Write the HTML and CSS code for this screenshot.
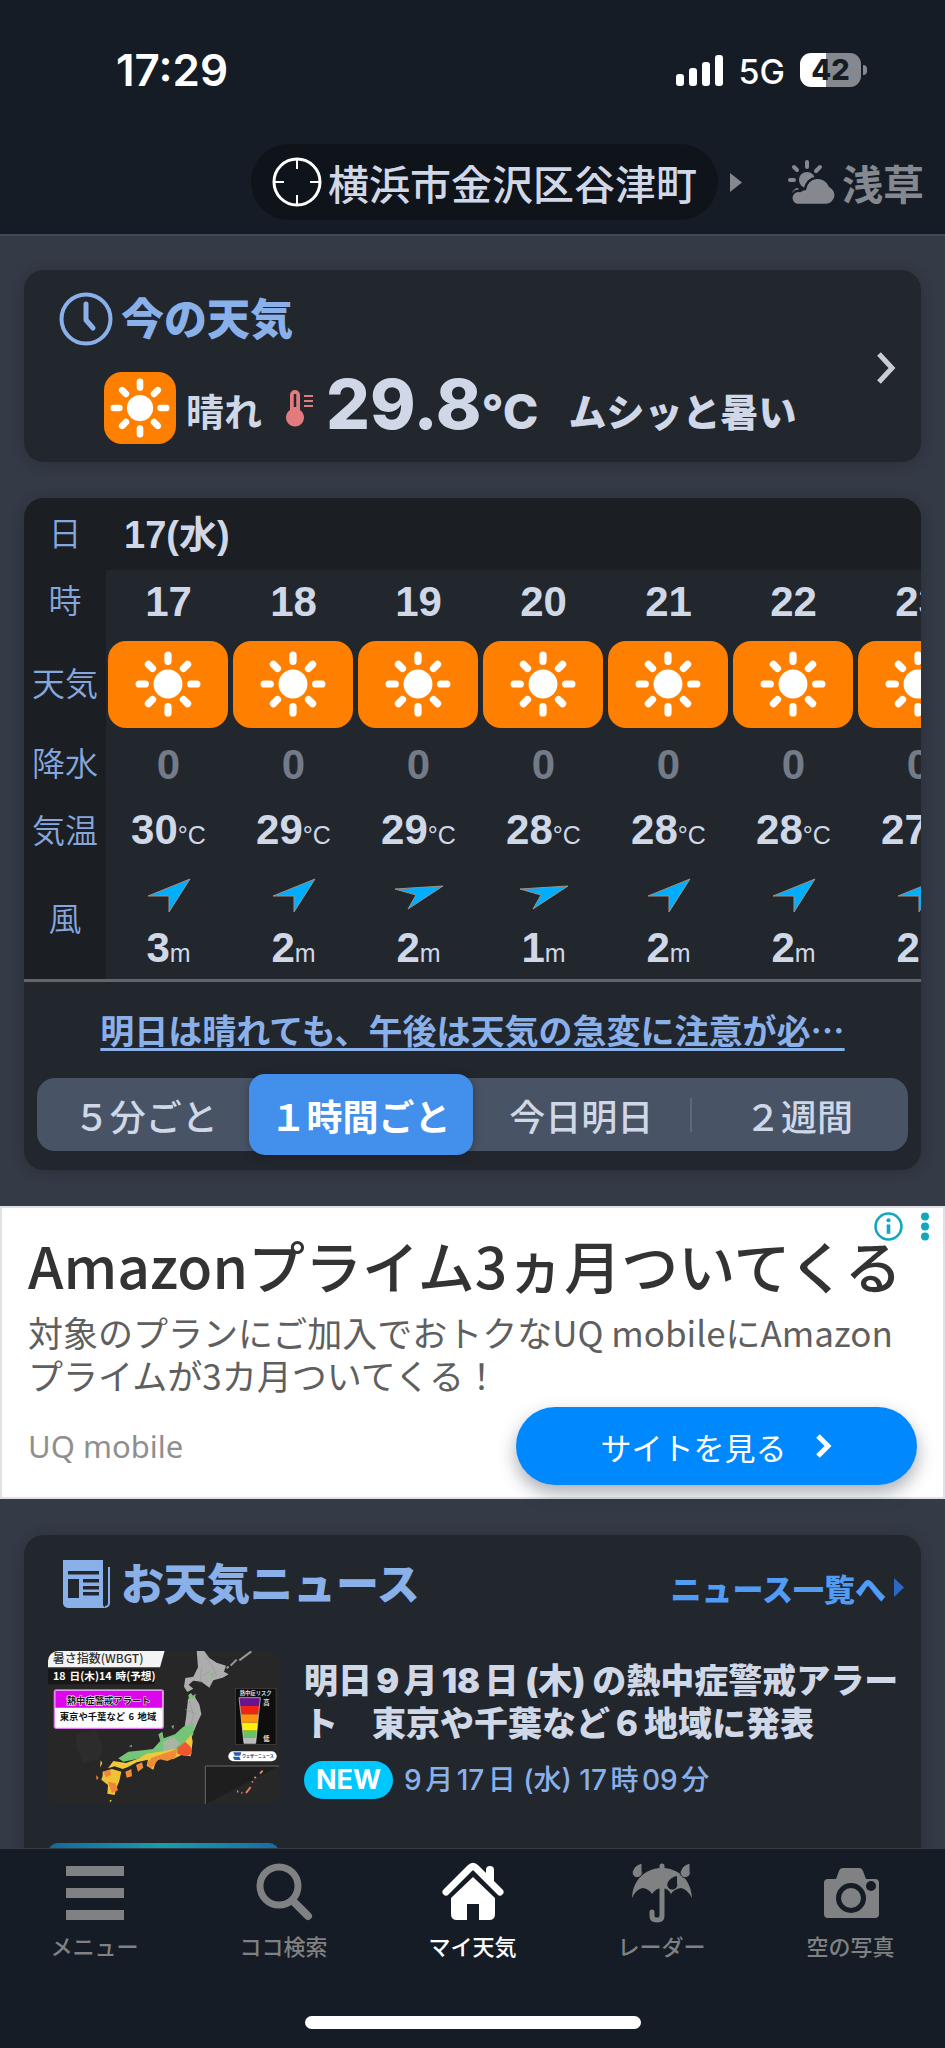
FILE: index.html
```html
<!DOCTYPE html>
<html lang="ja">
<head>
<meta charset="utf-8">
<meta name="viewport" content="width=device-width, initial-scale=1">
<title>マイ天気</title>
<link rel="stylesheet" href="styles.css">
</head>
<body>
<svg class="defs" aria-hidden="true">
  <defs>
    <symbol id="sun" viewBox="0 0 64 64">
      <circle cx="32" cy="32" r="14" fill="#fff"/>
      <g stroke="#fff" stroke-width="7" stroke-linecap="round">
        <path d="M32 4v6M32 54v6M4 32h6M54 32h6M13 13l4 4M47 47l4 4M51 13l-4 4M17 47l-4 4"/>
      </g>
    </symbol>
    <symbol id="wind-ne" viewBox="0 0 50 40">
      <path d="M46 3L25 36V20H4Z" fill="#00aeff" stroke="#a08f86" stroke-width="1"/>
    </symbol>
    <symbol id="wind-e" viewBox="0 0 50 40">
      <path d="M49 10L14 33L22 19L1 13Z" fill="#00aeff" stroke="#a08f86" stroke-width="1"/>
    </symbol>
  </defs>
</svg>

<header class="header">
  <div class="status">
    <span class="clock">17:29</span>
    <svg class="signal" viewBox="0 0 48 31" fill="#fff"><rect x="0" y="19" width="8" height="12" rx="3"/><rect x="13" y="13" width="8" height="18" rx="3"/><rect x="26" y="7" width="8" height="24" rx="3"/><rect x="39" y="0" width="8" height="31" rx="3"/></svg>
    <span class="network">5G</span>
    <span class="battery">42</span>
  </div>
  <nav class="places">
    <button class="place current" type="button">
      <svg class="target" viewBox="0 0 50 50" fill="none" stroke="#fff"><circle cx="25" cy="25" r="23" stroke-width="3"/><path d="M25 3v9M25 38v9M3 25h9M38 25h9" stroke-width="2"/></svg>
      <span>横浜市金沢区谷津町</span>
    </button>
    <svg class="next" viewBox="0 0 12 19"><path d="M0 0L12 9.500L0 19Z" fill="#85898f"/></svg>
    <button class="place other" type="button">
      <svg class="cloud" viewBox="0 0 48 45"><g stroke="#85898f" stroke-width="4" stroke-linecap="round"><path d="M19 2v5M6 7l3 3M32 7l-4 4M2 20h4M6 33l3-3"/></g><circle cx="19" cy="20" r="8" fill="#85898f"/><path d="M9 45A7 7 0 0 1 12 31A8 8 0 0 1 17 29A13 13 0 0 1 42 26A10 10 0 0 1 38 45Z" fill="#85898f" stroke="#161c25" stroke-width="2.500"/></svg>
      <span>浅草</span>
    </button>
  </nav>
</header>

<main class="main">
  <a class="card now" href="#now">
    <span class="now-body">
      <span class="heading">
        <svg class="heading-icon" viewBox="0 0 54 54" fill="none" stroke="#8ab0ea"><circle cx="27" cy="27" r="24.500" stroke-width="4"/><path d="M27 12v16l7 8" stroke-width="5" stroke-linecap="round" stroke-linejoin="round"/></svg>
        <span class="title">今の天気</span>
      </span>
      <span class="conditions">
        <span class="sun-tile"><svg class="sun-large"><use href="#sun"/></svg></span>
        <span class="word">晴れ</span>
        <svg class="thermo" viewBox="0 0 28 38"><path d="M9 1a5 5 0 0 1 5 5v15a9 9 0 1 1-10 0V6a5 5 0 0 1 5-5z" fill="#e37b7e"/><path d="M9 5v13" stroke="#22272e" stroke-width="2.500"/><path d="M18 7h9M18 12h9M18 17h9" stroke="#e37b7e" stroke-width="2"/></svg>
        <span class="degrees">29.8<small>°C</small></span>
        <span class="word feel">ムシッと暑い</span>
      </span>
    </span>
    <svg class="chevron" viewBox="0 0 22 34"><path d="M4 3l13 14L4 31" fill="none" stroke="#c9ccd4" stroke-width="5"/></svg>
  </a>

  <section class="card forecast">
    <div class="table-wrap">
      <table class="hours">
        <colgroup><col class="label-col"><col span="7"></colgroup>
        <tr class="row-date"><th scope="row">日</th><td colspan="7">17(水)</td></tr>
        <tr class="row-hour"><th scope="row">時</th><td>17</td><td>18</td><td>19</td><td>20</td><td>21</td><td>22</td><td>23</td></tr>
        <tr class="row-sky"><th scope="row">天気</th>
          <td><div class="tile"><svg class="sun"><use href="#sun"/></svg></div></td>
          <td><div class="tile"><svg class="sun"><use href="#sun"/></svg></div></td>
          <td><div class="tile"><svg class="sun"><use href="#sun"/></svg></div></td>
          <td><div class="tile"><svg class="sun"><use href="#sun"/></svg></div></td>
          <td><div class="tile"><svg class="sun"><use href="#sun"/></svg></div></td>
          <td><div class="tile"><svg class="sun"><use href="#sun"/></svg></div></td>
          <td><div class="tile"><svg class="sun"><use href="#sun"/></svg></div></td></tr>
        <tr class="row-rain"><th scope="row">降水</th><td>0</td><td>0</td><td>0</td><td>0</td><td>0</td><td>0</td><td>0</td></tr>
        <tr class="row-temp"><th scope="row">気温</th><td>30<small>°C</small></td><td>29<small>°C</small></td><td>29<small>°C</small></td><td>28<small>°C</small></td><td>28<small>°C</small></td><td>28<small>°C</small></td><td>27<small>°C</small></td></tr>
        <tr class="row-arrow"><th class="wind-label" scope="rowgroup" rowspan="2">風</th>
          <td><svg class="arrow"><use href="#wind-ne"/></svg></td>
          <td><svg class="arrow"><use href="#wind-ne"/></svg></td>
          <td><svg class="arrow"><use href="#wind-e"/></svg></td>
          <td><svg class="arrow"><use href="#wind-e"/></svg></td>
          <td><svg class="arrow"><use href="#wind-ne"/></svg></td>
          <td><svg class="arrow"><use href="#wind-ne"/></svg></td>
          <td><svg class="arrow"><use href="#wind-ne"/></svg></td></tr>
        <tr class="row-wind"><td>3<small>m</small></td><td>2<small>m</small></td><td>2<small>m</small></td><td>1<small>m</small></td><td>2<small>m</small></td><td>2<small>m</small></td><td>2<small>m</small></td></tr>
      </table>
    </div>
    <a class="notice" href="#notice">明日は晴れても、午後は天気の急変に注意が必…</a>
    <div class="segments">
      <button type="button">５分ごと</button>
      <button type="button" class="active">１時間ごと</button>
      <button type="button">今日明日</button>
      <button type="button" class="divided">２週間</button>
    </div>
  </section>

  <section class="ad">
    <div class="ad-marks">
      <svg class="ad-info" viewBox="0 0 28 28"><circle cx="14" cy="14" r="12.500" fill="none" stroke="#11a7bd" stroke-width="2.500"/><circle cx="14" cy="8" r="2" fill="#11a7bd"/><path d="M14 12v9" stroke="#11a7bd" stroke-width="3.500"/></svg>
      <svg class="ad-menu" viewBox="0 0 8 28" fill="#11a7bd"><circle cx="4" cy="4" r="4"/><circle cx="4" cy="14" r="4"/><circle cx="4" cy="24" r="4"/></svg>
    </div>
    <h2 class="ad-title">Amazonプライム3ヵ月ついてくる</h2>
    <p class="ad-text">対象のプランにご加入でおトクなUQ mobileにAmazonプライムが3カ月ついてくる！</p>
    <div class="ad-foot">
      <span class="ad-brand">UQ mobile</span>
      <a class="ad-button" href="#site">サイトを見る
        <svg class="ad-arrow" viewBox="0 0 18 26"><path d="M3 3l10 10L3 23" fill="none" stroke="#fff" stroke-width="5"/></svg>
      </a>
    </div>
  </section>

  <section class="card news">
    <div class="news-head">
      <div class="heading">
        <svg class="heading-icon" viewBox="0 0 54 54"><path d="M4 3H44V46a4 4 0 0 0 4 5H9a5 5 0 0 1-5-5Z" fill="#8ab0ea"/><path d="M50 10v36a4 4 0 0 1-4 4" fill="none" stroke="#8ab0ea" stroke-width="2"/><path d="M9 14h31v3.500H9zM9 22h11v19H9zM24 22h16v3.500H24zM24 29h16v3.500H24zM24 35h16v3.500H24z" fill="#22272e"/></svg>
        <h2 class="title">お天気ニュース</h2>
      </div>
      <a class="more" href="#news">ニュース一覧へ<svg class="more-arrow" viewBox="0 0 10 19"><path d="M0 0l10 9.500L0 19Z" fill="#2d68c4"/></svg></a>
    </div>
    <a class="article" href="#article">
      <svg class="thumb" viewBox="54 39 693 461" preserveAspectRatio="xMidYMid slice">
        <rect x="54" y="39" width="693" height="461" fill="#272727"/>
        <path d="M140 290l60-15 18 60-10 30-50 10-20-50z" fill="#2c2c2c"/>
        <path d="M500 39h22l16 22 22 14 28 9-6 18 14 8-18 10-28 8-12 22-24-18-24-3-14 12 14 12-18 10-10-16 4-26 24-4 14-28z" fill="#adadad"/>
        <path d="M530 60l20 30 10 25M515 90l-5 45M540 100l-20 15" fill="none" stroke="#979797" stroke-width="2"/>
        <path d="M540 110l12-6-4 18zM475 172l8-6 6 8 8-6-2 14-18 4z" fill="#7fc07c"/>
        <path d="M590 92l6-6M602 84l18-18M628 68l36-27" stroke="#999" stroke-width="6"/>
        <path d="M474 184l22-4 12 20 6 30-12 25-10 25-50 8 22-22 4-26z" fill="#adadad"/>
        <path d="M466 215l34 15M478 190l12 40-6 30" fill="none" stroke="#979797" stroke-width="2"/>
        <path d="M492 258l-2 32-20 30-30 24-50 2-40 12-70 14-15-10 30-20 44-4 30-4 22-24-6-20 12-8 4 20 34-12 24-22 12-4z" fill="#74c577"/>
        <path d="M400 312l30-15 20 20-22 22-28 8z" fill="#a8b5a4"/>
        <path d="M350 348l52-8 48-8 34-42 4 22-6 44-28-4-24 12-24-6-28 12-8 26-20-12 4-18-34 8-26 14-16 6-24-8-20 6 16-22 38 6 40-14z" fill="#f0c83c"/>
        <path d="M442 330l24-18 16 16 4 20-18 8-26-8z" fill="#ee5830"/>
        <path d="M400 348l42-14-6 26-24 10-26-6-22 30-14-14 14-20zM318 382l18-8 4 16-16 12zM286 402l18-8 2 22-16 4z" fill="#f08c35"/>
        <path d="M218 402l28-8 28 8-6 28-10 24-4 18-22-4 2-26-20-16 4-12z" fill="#efc235"/>
        <path d="M220 402l20-6 4 15-16 8zM234 432l22 4 8 22-18 8zM198 412l8 8-6 8z" fill="#f18436"/>
        <path d="M212 368l5 8-7 14zM240 486l6 3-7 5z" fill="#dfcf43"/>
        <path d="M387 290l10 5-4 12zM424 266l8-4-2 13zM297 326l8-5 1 8z" fill="#84a980"/>
        <path d="M54 39h350l-14 50H54z" fill="#f4f4f4"/>
        <path d="M54 94h320v46H54z" fill="#171717"/>
        <rect x="73" y="157" width="327" height="115" rx="6" fill="#fff"/><path d="M76 160h321v50H76z" fill="#dc05ec"/><rect x="73" y="157" width="327" height="115" rx="6" fill="none" stroke="#e07bea" stroke-width="4"/>
        <text class="map-title" x="68" y="77">暑さ指数(WBGT)</text>
        <text class="map-date" x="69" y="127">18日(木)14時(予想)</text>
        <text class="map-alert" x="236" y="198">熱中症警戒アラート</text>
        <text class="map-area" x="234" y="248">東京や千葉など6地域</text>
        <rect x="616" y="152" width="122" height="169" fill="#0e0e0e" stroke="#4a4a4a" stroke-width="2"/>
        <text class="map-risk" x="629" y="173">熱中症リスク</text>
        <path d="M627 180h64l-3 25h-58z" fill="#6b128f"/><path d="M630 205h58l-3 25h-52z" fill="#f02412"/><path d="M633 230h52l-2 25h-48z" fill="#ff9210"/><path d="M635 255h48l-2 24h-43z" fill="#fff00b"/><path d="M638 279h43l-2 20h-39z" fill="#68c164"/><path d="M640 299h39l-2 18h-35z" fill="#bababa"/>
        <path d="M627 180l15 137h35l14-137z" fill="none" stroke="#ddd" stroke-width="2"/>
        <text class="map-level" x="700" y="202">高</text><text class="map-level" x="700" y="311">低</text>
        <rect x="595" y="341" width="145" height="30" rx="15" fill="#fff"/><path d="M610 344h24l-3 10h-17zM608 357h20l4 10h-18z" fill="#2561ad"/>
        <text class="map-brand" x="636" y="361">ウェザーニュース</text>
        <path d="M526 500V385h221" fill="#1e1e1e" stroke="#686868" stroke-width="3"/>
        <path d="M690 408l8-9M674 422l3-5M666 434l3-3M648 466l14-18M621 461l4 1M634 465l3 1" stroke="#df8361" stroke-width="6"/>
      </svg>
      <span class="article-body">
        <strong class="article-title">明日9月18日 (木) の熱中症警戒アラート　東京や千葉など６地域に発表</strong>
        <span class="article-meta"><span class="badge">NEW</span><time>9月17日 (水) 17時09分</time></span>
      </span>
    </a>
    <div class="article-next"></div>
  </section>
</main>

<nav class="tabs">
  <a href="#menu"><svg class="tab-icon" viewBox="0 0 64 64" fill="#7f8182"><path d="M3 6h58v10H3zM3 28h58v10H3zM3 50h58v10H3z"/></svg>メニュー</a>
  <a href="#search"><svg class="tab-icon" viewBox="0 0 64 64" fill="none" stroke="#7f8182"><circle cx="27" cy="26" r="19" stroke-width="7"/><path d="M42 42l14 14" stroke-width="8" stroke-linecap="round"/></svg>ココ検索</a>
  <a href="#home" class="selected"><svg class="tab-icon" viewBox="0 0 64 64"><path d="M5 32L29 8q3-3 6 0l24 24" fill="none" stroke="#fff" stroke-width="7" stroke-linecap="round"/><path d="M45 10q0-4 4-4t4 4v16l-8-8z" fill="#fff"/><path d="M32 17L54 38V54q0 6-6 6H38V44H26V60H16q-6 0-6-6V38Z" fill="#fff"/></svg>マイ天気</a>
  <a href="#radar"><svg class="tab-icon" viewBox="0 0 64 64"><path d="M32 8C47 8 61 18 62 38Q57 29 51 28Q44 29 41 34Q38 28 32 28Q26 28 22 34Q19 29 13 28Q6 29 2 38C3 18 17 8 32 8Z" fill="#7f8182"/><path d="M32 6v50q0 4-5 4t-5-4v-4" fill="none" stroke="#7f8182" stroke-width="5" stroke-linecap="round"/><path d="M12 3v8a5 5 0 1 1-9-1q2-5 9-7zM60 3v8a5 5 0 1 1-9-1q2-5 9-7z" fill="#7f8182" stroke="#161c25" stroke-width="1"/><path d="M47 16v7a5 5 0 1 1-9-1q3-5 9-6z" fill="#161c25"/></svg>レーダー</a>
  <a href="#photo"><svg class="tab-icon" viewBox="0 0 64 64"><path d="M9 19h8l3-8q1-3 4-3h16q3 0 4 3l3 8h9q4 0 4 4v31q0 4-4 4H9q-4 0-4-4V23q0-4 4-4z" fill="#7f8182"/><circle cx="32" cy="38" r="12.500" fill="none" stroke="#161c25" stroke-width="5"/><circle cx="52" cy="26" r="5" fill="#161c25"/></svg>空の写真</a>
</nav>
<div class="home-bar"><span></span></div>
</body>
</html>
```

FILE: styles.css
```css
* { box-sizing: border-box; }

body {
  margin: 0;
  height: 100vh;
  display: flex;
  flex-direction: column;
  background: #343a46;
  color: #d0d8e8;
  font-family: Inter, "Noto Sans CJK JP", sans-serif;
  overflow: hidden;
}

button { border: 0; padding: 0; background: none; color: inherit; font: inherit; }
a { color: inherit; text-decoration: none; }
h2, p { margin: 0; }
svg { flex: none; }
.defs { position: absolute; width: 0; height: 0; }

/* Header */
.header {
  flex: none;
  padding: 36px 0 14px;
  background: #161c25;
  border-bottom: 2px solid #434955;
}
.status {
  display: flex;
  align-items: center;
  height: 68px;
  padding: 0 84px 0 116px;
  color: #fff;
}
.clock { font-size: 44px; font-weight: 600; }
.signal { width: 48px; height: 31px; margin-left: auto; }
.network { margin: 2px 15px 0; font-size: 34px; font-weight: 500; }
.battery {
  position: relative;
  width: 61px;
  height: 34px;
  border-radius: 11px;
  background: linear-gradient(90deg, #fff 42%, #85898f 42%);
  color: #161c25;
  font-size: 29px;
  font-weight: 800;
  line-height: 34px;
  text-align: center;
}
.battery::after {
  content: "";
  position: absolute;
  top: 12px;
  right: -6px;
  width: 4px;
  height: 10px;
  border-radius: 0 4px 4px 0;
  background: #85898f;
}
.places {
  display: flex;
  align-items: center;
  margin-top: 40px;
  padding-left: 251px;
  overflow: hidden;
}
.place {
  display: flex;
  align-items: center;
  gap: 6px;
  height: 76px;
  font-family: "Noto Sans CJK JP", sans-serif;
  font-size: 41px;
  font-weight: 500;
  line-height: 56px;
  white-space: nowrap;
}
.current { padding: 0 21px; border-radius: 38px; background: #0f131a; }
.other { color: #85898f; font-weight: 700; }
.target { width: 50px; height: 50px; }
.next { width: 12px; height: 19px; margin: 0 46px 0 12px; }
.cloud { width: 48px; height: 45px; }

/* Cards */
.main { flex: 1; min-height: 0; overflow: hidden; padding-top: 34px; }
.card {
  margin: 0 24px 36px;
  border-radius: 20px;
  background: #22272e;
  box-shadow: 0 2px 14px rgba(20, 24, 30, 0.3);
}
.heading { display: flex; align-items: center; gap: 8px; height: 54px; }
.heading-icon { width: 54px; height: 54px; }
.title { color: #8ab0ea; font-size: 43px; font-weight: 900; line-height: 54px; }
.now {
  display: flex;
  align-items: center;
  justify-content: space-between;
  height: 192px;
  padding: 4px 24px 0 35px;
}
.now-body { display: flex; flex-direction: column; gap: 26px; }
.conditions { display: flex; align-items: center; height: 72px; padding-left: 45px; }
.sun-tile { display: flex; padding: 6px; border-radius: 18px; background: #ff8000; }
.sun-large { width: 60px; height: 60px; }
.word { margin: 8px 0 0 10px; font-size: 38px; font-weight: 700; line-height: 56px; }
.thermo { width: 28px; height: 38px; margin: 0 12px 0 24px; }
.degrees { font-size: 69px; font-weight: 800; line-height: 72px; }
.degrees small { font-size: 48px; }
.feel { margin-left: 30px; font-weight: 900; }
.chevron { width: 22px; height: 34px; }

/* Hourly forecast */
.forecast { overflow: hidden; padding-bottom: 19px; }
.table-wrap { overflow: hidden; border-bottom: 3px solid #62666c; }
.hours {
  width: 957px;
  table-layout: fixed;
  border-collapse: collapse;
  font-family: "Liberation Sans", "Noto Sans CJK JP", sans-serif;
  font-size: 42px;
  font-weight: 700;
  line-height: 48px;
  text-align: center;
}
.label-col { width: 82px; }
.hours th {
  padding: 2px 0 0;
  background: #1b1f23;
  color: #86a6de;
  font-size: 33px;
  font-weight: 350;
}
.hours td { padding: 2px 0 0; }
.hours small { font-size: 25px; font-weight: 400; }
.row-date { height: 72px; }
.hours .row-date td { padding-left: 18px; background: #1b1f23; font-size: 38px; text-align: left; }
.row-hour { height: 62px; }
.row-sky { height: 104px; }
.hours .row-sky td { padding: 0; }
.row-rain { height: 56px; }
.row-rain td { color: #747b88; }
.row-temp { height: 78px; }
.row-arrow { height: 50px; }
.row-wind { height: 59px; }
.hours .wind-label { padding-bottom: 12px; }
.tile {
  display: flex;
  align-items: center;
  justify-content: center;
  height: 87px;
  margin: 0 3px 0 2px;
  border-radius: 18px;
  background: #ff8000;
}
.sun { width: 66px; height: 66px; }
.arrow { display: block; width: 50px; height: 40px; margin: 0 auto; }
.notice {
  display: block;
  padding: 24px 12px;
  color: #8ab0ea;
  font-family: "Noto Sans CJK JP", sans-serif;
  font-size: 34px;
  font-weight: 700;
  line-height: 48px;
  text-align: center;
  text-decoration: underline;
  text-decoration-thickness: 3px;
  text-underline-offset: 4px;
  white-space: nowrap;
}
.segments {
  display: grid;
  grid-template-columns: repeat(4, 1fr);
  align-items: center;
  height: 73px;
  margin: 0 13px;
  border-radius: 18px;
  background: #485466;
  font-size: 36px;
  font-weight: 500;
}
.segments .active {
  height: 81px;
  margin: -4px 0 -4px -6px;
  border-radius: 16px;
  background: #428fec;
  color: #fff;
  font-weight: 700;
  box-shadow: 0 2px 8px rgba(20, 24, 30, 0.4);
}
.segments .divided {
  background: linear-gradient(#5d6879, #5d6879) no-repeat left center / 2px 34px;
}

/* Advertisement */
.ad {
  position: relative;
  padding: 21px 26px 12px;
  border: 2px solid #dfe1e6;
  background: #fff;
  color: #333;
  font-family: "Noto Sans CJK JP", sans-serif;
}
.ad-marks { position: absolute; top: 4px; right: 14px; display: flex; gap: 18px; }
.ad-info { width: 29px; height: 29px; }
.ad-menu { width: 8px; height: 29px; }
.ad-title { font-size: 57px; font-weight: 500; line-height: 70px; white-space: nowrap; }
.ad-text { margin-top: 11px; color: #5f5f5f; font-size: 35px; line-height: 43px; }
.ad-foot { display: flex; align-items: center; justify-content: space-between; margin-top: 11px; }
.ad-brand { color: #8f8f8f; font-family: "Noto Sans", sans-serif; font-size: 31px; }
.ad-button {
  display: flex;
  align-items: center;
  justify-content: center;
  gap: 28px;
  width: 401px;
  height: 78px;
  border-radius: 39px;
  background: #0088ff;
  color: #fff;
  font-size: 31px;
  box-shadow: 0 8px 18px rgba(40, 50, 70, 0.4);
}
.ad-arrow { width: 18px; height: 26px; }

/* News */
.news { margin-top: 36px; padding: 22px 17px 0 24px; }
.news-head { display: flex; align-items: center; justify-content: space-between; padding-left: 11px; }
.more {
  display: flex;
  align-items: center;
  gap: 8px;
  margin-top: 6px;
  color: #519cf5;
  font-size: 31px;
  font-weight: 900;
}
.more-arrow { width: 10px; height: 19px; }
.article { display: flex; gap: 25px; margin-top: 40px; text-autospace: normal; }
.thumb { width: 231px; height: 153px; border-radius: 10px; }
.article-body { flex: 1; padding-top: 8px; }
.article-title { display: block; font-size: 34px; font-weight: 900; line-height: 43px; }
.article-meta {
  display: flex;
  align-items: center;
  gap: 11px;
  margin-top: 16px;
  color: #8ab0ea;
  font-size: 28px;
  font-weight: 500;
  line-height: 38px;
}
.badge {
  padding: 0 12px;
  border-radius: 19px;
  background: #00c8ff;
  color: #fff;
  font-size: 27px;
  font-weight: 700;
}
.article-next {
  width: 231px;
  height: 153px;
  margin-top: 39px;
  border-radius: 10px;
  background: linear-gradient(90deg, #12699f, #1a9dab 50%, #146da6);
}

.map-title, .map-date, .map-alert, .map-area, .map-risk, .map-level, .map-brand {
  font-family: "Noto Sans CJK JP", sans-serif;
  font-weight: 700;
}
.map-title { font-size: 36px; font-weight: 500; fill: #333; }
.map-date { font-size: 32px; fill: #fff; }
.map-alert { font-size: 28px; fill: #111; stroke: #fff; stroke-width: 3px; paint-order: stroke; text-anchor: middle; }
.map-area { font-size: 28px; fill: #111; text-anchor: middle; }
.map-risk { font-size: 16px; fill: #ddd; }
.map-level { font-size: 19px; fill: #ddd; }
.map-brand { font-size: 12px; fill: #1e3561; }

/* Tab bar */
.tabs {
  flex: none;
  display: grid;
  grid-template-columns: repeat(5, 1fr);
  padding-top: 11px;
  border-top: 1px solid #343a44;
  background: #161c25;
  color: #7f8182;
  font-family: "Noto Sans CJK JP", sans-serif;
  font-size: 22px;
  font-weight: 500;
  line-height: 32px;
}
.tabs a { display: flex; flex-direction: column; align-items: center; gap: 5px; }
.tabs .selected { color: #fff; }
.tab-icon { width: 64px; height: 64px; }
.home-bar {
  flex: none;
  display: flex;
  justify-content: center;
  height: 87px;
  padding-top: 55px;
  background: #161c25;
}
.home-bar span { width: 336px; height: 13px; border-radius: 7px; background: #fff; }
```
